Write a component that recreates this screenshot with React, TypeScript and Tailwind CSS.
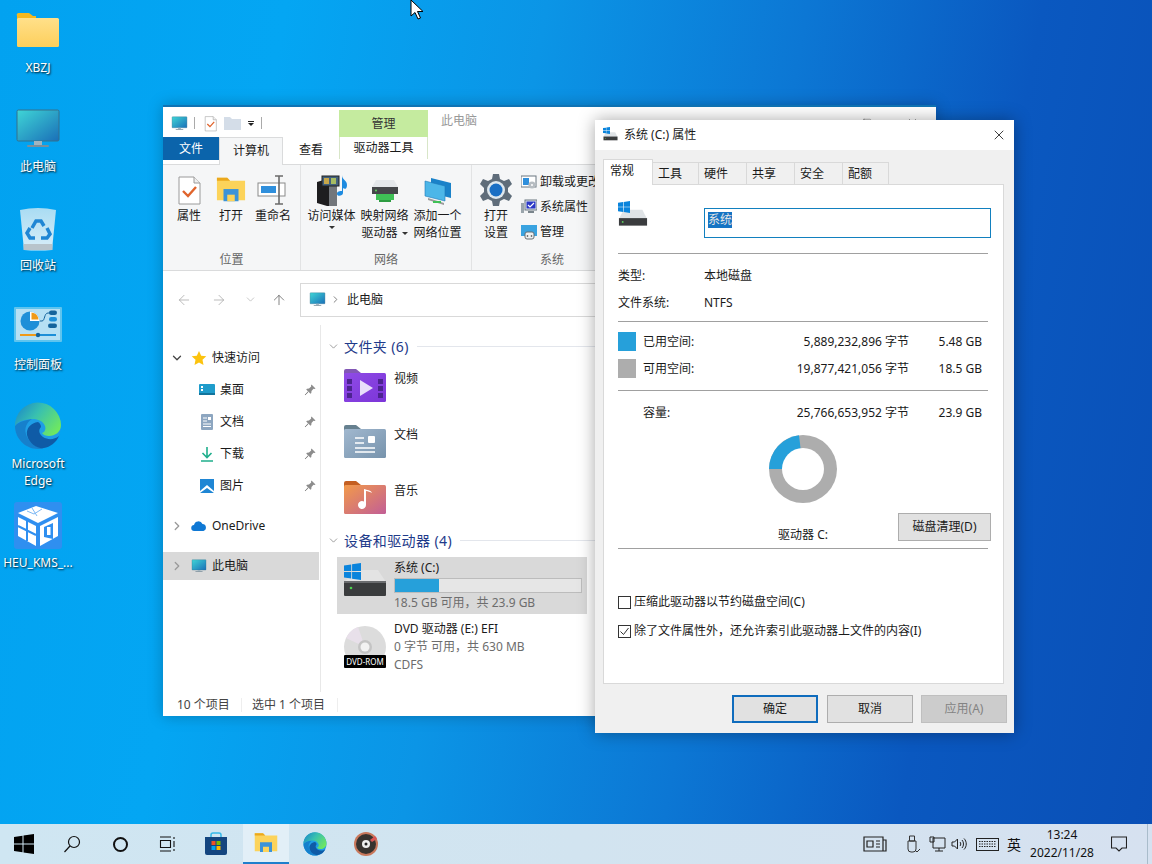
import { ArrowLeft, ArrowRight, ArrowUp, ChevronDown, ChevronRight, X, Square } from "lucide-react";
import type { ReactNode } from "react";

const Monitor = ({ s = 48 }: { s?: number }) => (
  <svg width={s} height={s} viewBox="0 0 48 48">
    <defs>
      <linearGradient id="mon" x1="0" y1="0" x2="1" y2="1">
        <stop offset="0" stopColor="#3fd6d6" />
        <stop offset="1" stopColor="#1a6fb8" />
      </linearGradient>
    </defs>
    <rect x="3" y="5" width="42" height="31" rx="1.5" fill="url(#mon)" stroke="#35708c" strokeWidth="1" />
    <rect x="20" y="36" width="8" height="4" fill="#9fb4c0" />
    <rect x="13" y="40" width="22" height="2" rx="1" fill="#7b8f9b" />
  </svg>
);

const Folder = () => (
  <svg width="48" height="48" viewBox="0 0 48 48">
    <defs>
      <linearGradient id="fol" x1="0" y1="0" x2="0" y2="1">
        <stop offset="0" stopColor="#ffe08a" />
        <stop offset="1" stopColor="#fdcf5c" />
      </linearGradient>
    </defs>
    <path d="M3 10a2 2 0 0 1 2-3h10l4 3h3v5H3z" fill="#f5b81f" />
    <rect x="3" y="12" width="42" height="29" rx="1.5" fill="url(#fol)" />
  </svg>
);

const Recycle = () => (
  <svg width="48" height="48" viewBox="0 0 48 48">
    <defs>
      <linearGradient id="bin" x1="0" y1="0" x2="0" y2="1">
        <stop offset="0" stopColor="#a9dcf3" />
        <stop offset="1" stopColor="#d9eef8" />
      </linearGradient>
    </defs>
    <path d="M6 6 Q24 2 42 6 L38 46 Q24 47 10 46Z" fill="url(#bin)" />
    <rect x="9.500" y="40" width="29" height="6" fill="#b8c4cb" />
    <g fill="none" stroke="#1f86d4" strokeWidth="3.500">
      <path d="M18 24l4-7h5l3 5" />
      <path d="M33 24l3 6-3 4h-6" />
      <path d="M21 34h-5l-3-5 3-5" />
    </g>
  </svg>
);

const ControlPanel = () => (
  <svg width="48" height="48" viewBox="0 0 48 48">
    <rect x="0" y="4" width="48" height="35" rx="1" fill="#5fc4ee" />
    <rect x="2" y="6" width="44" height="31" fill="#b6e0f4" />
    <circle cx="16" cy="18" r="9.500" fill="#1d8fd8" />
    <path d="M16 8.500a9.500 9.500 0 0 1 9.500 9.500H16z" fill="#fff" />
    <path d="M17.500 9.500a8 8 0 0 1 7 7h-7z" fill="#f09a18" />
    <path d="M26 18h2c3 0 2-8 6-8h2" fill="none" stroke="#14639c" strokeWidth="1" />
    <rect x="35" y="7.500" width="8" height="4.500" rx="2.200" fill="#14639c" />
    <rect x="35" y="14" width="8" height="4.500" rx="2.200" fill="#1d8fd8" />
    <rect x="34" y="20.500" width="9" height="4.500" rx="2.200" fill="#14639c" />
    <path d="M6 32h18" stroke="#f09a18" strokeWidth="2" />
    <path d="M24 32h18" stroke="#1d8fd8" strokeWidth="2" />
    <circle cx="24" cy="32" r="2.200" fill="#14639c" />
  </svg>
);

const Edge = ({ s = 48 }: { s?: number }) => (
  <svg width={s} height={s} viewBox="0 0 48 48">
    <defs>
      <linearGradient id="edA" x1="0" y1="0.1" x2="1" y2="0.7">
        <stop offset="0" stopColor="#1a86c9" />
        <stop offset="0.45" stopColor="#38c0b0" />
        <stop offset="1" stopColor="#6fe860" />
      </linearGradient>
    </defs>
    <circle cx="24" cy="24" r="23" fill="#1e9ee6" />
    <path d="M1 24C1 24 4 19 18 17C13 20 10 26 12 32C14 40 22 46 30 46C28 47 26 47 24 47C11 47 1 36 1 24Z" fill="#1680cc" />
    <path d="M24 20C17 21 12 26 13 33C15 42 24 47 30 46C36 45 42 41 45 34C40 38 34 38 29 35C25 32 24 28 27 25C27 23 26 21 24 20Z" fill="#0f5ba6" />
    <path d="M1 24A23 23 0 0 1 47 23C47 30 41 34 35 34C32 34 29 33 28 31C31 30 32 27 31 24C29 19 24 17 19 17C11 17 4 19 1 24Z" fill="url(#edA)" />
  </svg>
);

const Heu = () => (
  <svg width="48" height="48" viewBox="0 0 48 48">
    <rect y="1" width="48" height="47" rx="3" fill="#2f8ff0" />
    <path d="M4 12L22 5 44 12 24 22z" fill="#fff" />
    <path d="M13 10l7 3 8-5M18 7l5 8" stroke="#7db8f4" strokeWidth="1" fill="none" />
    <path d="M4 16L22 25V45L4 35z" fill="#fff" />
    <path d="M13 20V40M4 25L22 34" stroke="#2f8ff0" strokeWidth="2" />
    <path d="M26 25L44 16V35L26 45z" fill="#fff" />
    <path d="M30 26l9-4v16l-9-2z" fill="#2f8ff0" />
    <rect x="33" y="26" width="3.500" height="8" fill="#fff" />
  </svg>
);

const WinLogo = ({ s = 20, c = "#000" }: { s?: number; c?: string }) => (
  <svg width={s} height={s} viewBox="0 0 20 20" fill={c}>
    <path d="M0 3l8.500-1.200V9.500H0zM9.500 1.600L20 0v9.500H9.500zM0 10.500h8.500v7.700L0 17zM9.500 10.500H20V20L9.500 18.400z" />
  </svg>
);

const PropsIcon = ({ s = 32 }: { s?: number }) => (
  <svg width={s} height={s} viewBox="0 0 32 32">
    <path d="M6 3h15l6 6v21H6z" fill="#fff" stroke="#9a9a9a" />
    <path d="M21 3v6h6" fill="#eee" stroke="#9a9a9a" />
    <path d="M10 17l5 5 8-9" fill="none" stroke="#e0642c" strokeWidth="2.400" />
  </svg>
);

const OpenFolder = ({ s = 32 }: { s?: number }) => (
  <svg width={s} height={s} viewBox="0 0 32 32">
    <path d="M1 3h11l3 3h16v21H1z" fill="#fcd35a" />
    <path d="M1 3h11l3 3H1z" fill="#eba81d" />
    <rect x="8" y="15" width="16" height="13" fill="#3b93d8" />
    <rect x="12" y="21" width="8" height="7" fill="#fcd35a" />
  </svg>
);

const RenameIcon = () => (
  <svg width="32" height="32" viewBox="0 0 32 32">
    <rect x="1" y="9" width="27" height="13" fill="#fff" stroke="#8a8a8a" />
    <rect x="4" y="12" width="15" height="7" fill="#2f8fdc" />
    <path d="M18 2h8M22 2v28M18 30h8" stroke="#6b6b6b" strokeWidth="1.600" fill="none" />
  </svg>
);

const MediaIcon = () => (
  <svg width="34" height="34" viewBox="0 0 34 34">
    <path d="M2 9l10-3 10 3v24l-10 0-10-3z" fill="#1d1d1f" />
    <path d="M14 8l8 1v24h-8z" fill="#73777c" />
    <rect x="7" y="3" width="17" height="10" fill="#43617c" stroke="#222" />
    <rect x="9" y="5" width="5" height="6" fill="#c7a74a" />
    <rect x="16" y="5" width="5" height="6" fill="#a7bc62" />
    <path d="M27 2c0 5 5 5 5 10s-3 4-4 3V9v11c0 3-6 4-6 1s3-3 5-3z" fill="#1e8be0" />
  </svg>
);

const DriveSmall = ({ s = 32 }: { s?: number }) => (
  <svg width={s} height={s} viewBox="0 0 32 32">
    <path d="M6 5h20l5 10H1z" fill="#dfe3e6" />
    <rect x="1" y="14" width="30" height="8" fill="#3a3c3e" />
    <circle cx="5" cy="18" r="1" fill="#5ed35e" />
  </svg>
);

const MapDrive = () => (
  <svg width="32" height="32" viewBox="0 0 32 32">
    <path d="M7 6h18l4 7H3z" fill="#e4e7ea" />
    <rect x="3" y="13" width="26" height="7" fill="#45474a" />
    <circle cx="7" cy="16.500" r="1" fill="#5ed35e" />
    <rect x="7" y="20" width="18" height="6" fill="#3fc156" />
    <rect x="10" y="26" width="12" height="2" fill="#2d9c42" />
  </svg>
);

const NetLoc = () => (
  <svg width="32" height="32" viewBox="0 0 32 32">
    <path d="M9 4l20 5v15l-20-5z" fill="#1a82c9" />
    <path d="M3 7l20 5v15L3 22z" fill="#4cb6e8" stroke="#1c79b8" strokeWidth=".6" />
    <path d="M6 24l16 5v2l-16-5z" fill="#9a9a9a" />
    <rect x="11" y="27" width="8" height="2" fill="#3fc156" />
  </svg>
);

const Gear = () => (
  <svg width="34" height="34" viewBox="0 0 34 34">
    <path
      d="M14 1h6l1 5 4 2 5-2 3 5-4 4v4l4 4-3 5-5-2-4 2-1 5h-6l-1-5-4-2-5 2-3-5 4-4v-4L1 11l3-5 5 2 4-2z"
      fill="#5f6d7a"
    />
    <circle cx="17" cy="17" r="9" fill="#dfe8ee" />
    <circle cx="17" cy="17" r="6.500" fill="#1a6fc4" />
  </svg>
);

const SmallUninstall = () => (
  <svg width="16" height="16" viewBox="0 0 16 16">
    <rect x="0" y="2" width="15" height="11" fill="#fff" stroke="#6b7680" />
    <rect x="2" y="4" width="6" height="7" fill="#2f8fdc" />
    <circle cx="11" cy="11" r="3.600" fill="#b6bcc1" />
    <circle cx="11" cy="11" r="1" fill="#fff" />
  </svg>
);

const SmallSys = () => (
  <svg width="16" height="16" viewBox="0 0 16 16">
    <rect x="0" y="4" width="3" height="10" fill="#9aa5ac" />
    <rect x="4" y="1" width="12" height="10" fill="#dfe7ee" stroke="#6b7680" />
    <rect x="5.500" y="2.500" width="9" height="7" fill="#2a37c6" />
    <path d="M7 6l2 2 4-4" stroke="#fff" strokeWidth="1.200" fill="none" />
    <rect x="7" y="12" width="6" height="2" fill="#7a858c" />
  </svg>
);

const SmallManage = () => (
  <svg width="16" height="16" viewBox="0 0 16 16">
    <rect x="0" y="1" width="16" height="11" fill="#3aa3e0" />
    <rect x="4" y="8" width="9" height="7" rx="2" fill="#eef0f1" stroke="#676f75" />
    <circle cx="6.500" cy="12" r=".8" fill="#333" />
    <circle cx="10.500" cy="12" r=".8" fill="#333" />
  </svg>
);

const Star = () => (
  <svg width="16" height="16" viewBox="0 0 16 16">
    <path d="M8 1l2.200 4.700 5.100.6-3.800 3.500 1 5.200L8 12.400 3.500 15l1-5.200L.7 6.300l5.100-.6z" fill="#fcc30e" />
  </svg>
);

const PinIcon = () => (
  <svg width="12" height="12" viewBox="0 0 12 12" fill="#8c8c8c">
    <path d="M7.500 0.500L11.500 4.500 10.500 5 9.500 4.800 7.500 7 7.300 9 6.500 9.800 2.200 5.500 3 4.700 5 4.500 7.200 2.500 7 1.500z" />
    <path d="M4 7.800L1 11l3.200-3z" stroke="#8c8c8c" strokeWidth="1" />
  </svg>
);

const DesktopSmall = () => (
  <svg width="16" height="16" viewBox="0 0 16 16">
    <rect y="2" width="16" height="11" rx="1" fill="#1f9ccb" />
    <rect x="2" y="4" width="2" height="2" fill="#fff" />
    <rect x="2" y="7" width="2" height="2" fill="#fff" />
    <rect y="11" width="16" height="2" fill="#12749c" />
  </svg>
);

const DocSmall = () => (
  <svg width="16" height="16" viewBox="0 0 16 16">
    <rect x="2" y="0" width="12" height="16" rx="1" fill="#8da6c0" />
    <path d="M4 4h4M4 7h4M4 10h8M4 12.500h8" stroke="#fff" strokeWidth="1" />
    <rect x="9" y="3" width="3" height="3" fill="#fff" />
  </svg>
);

const DownloadSmall = () => (
  <svg width="16" height="16" viewBox="0 0 16 16" fill="none" stroke="#1fae8c" strokeWidth="1.600">
    <path d="M8 1v10M3.500 7L8 11.500 12.500 7M2 15h12" />
  </svg>
);

const PicSmall = () => (
  <svg width="16" height="16" viewBox="0 0 16 16">
    <rect x="1" y="1" width="14" height="14" fill="#1f86d4" />
    <path d="M1 15v-2l7-6 7 6v2l-7-5z" fill="#fff" />
  </svg>
);

const Cloud = () => (
  <svg width="16" height="16" viewBox="0 0 16 16">
    <path d="M3.500 13a3 3 0 0 1-.5-6 4.500 4.500 0 0 1 8.500-1A3.600 3.600 0 0 1 12.500 13z" fill="#0f78d4" />
  </svg>
);

const FolderBase = ({ id, tab, a, b, children }: { id: string; tab: string; a: string; b: string; children: ReactNode }) => (
  <svg width="42" height="35" viewBox="0 0 42 35">
    <defs>
      <linearGradient id={id} x1="0" y1="0" x2="1" y2="1">
        <stop offset="0" stopColor={a} />
        <stop offset="1" stopColor={b} />
      </linearGradient>
    </defs>
    <path d="M0 2a2 2 0 0 1 2-2h10l5 4h3v4H0z" fill={tab} />
    <rect x="0" y="4" width="42" height="29" rx="1.500" fill={`url(#${id})`} />
    {children}
  </svg>
);

const VideoFolder = () => (
  <FolderBase id="fv" tab="#8257b5" a="#8f4be6" b="#7c35d8">
    <g fill="#4c2390">
      <rect x="3" y="10" width="5" height="5" />
      <rect x="3" y="17" width="5" height="5" />
      <rect x="3" y="24" width="5" height="5" />
      <rect x="34" y="10" width="5" height="5" />
      <rect x="34" y="17" width="5" height="5" />
      <rect x="34" y="24" width="5" height="5" />
    </g>
    <path d="M16 11l13 8-13 8z" fill="#e9defa" />
  </FolderBase>
);

const DocFolder = () => (
  <FolderBase id="fd" tab="#66808f" a="#a1b8cf" b="#7793ac">
    <path d="M11 13h9M11 18h9M11 23h20M11 27h20" stroke="#fff" strokeWidth="1.600" />
    <rect x="24" y="11" width="7" height="7" rx="1" fill="#fff" />
  </FolderBase>
);

const MusicFolder = () => (
  <FolderBase id="fm" tab="#c45f22" a="#f29a4a" b="#c25e96">
    <path d="M22 10v14a4 4 0 1 1-2-3.500V8c3 1 7 1 8 4-2-1-4-2-6-2z" fill="#fff" />
  </FolderBase>
);

const DriveLarge = () => (
  <div className="relative h-[36px] w-[42px]">
    <svg className="absolute left-0 top-[7px]" width="42" height="28" viewBox="0 0 42 28">
      <path d="M14 0h20l8 12H0z" fill="#e3e3e3" />
      <rect x="0" y="11" width="42" height="15" rx="1" fill="#3a3c3d" />
      <rect x="0" y="11" width="42" height="2" fill="#6a6c6e" />
      <circle cx="7" cy="18" r="1.300" fill="#4dd04d" />
    </svg>
    <div className="absolute left-0 top-0">
      <WinLogo s={17} c="#0a84dc" />
    </div>
  </div>
);

const DvdIcon = () => (
  <div className="relative h-[42px] w-[42px]">
    <svg width="42" height="42" viewBox="0 0 42 42">
      <circle cx="21" cy="21" r="21" fill="#dcdcdc" />
      <path d="M21 21L2 12a21 21 0 0 1 12-11z" fill="#e8e0ea" />
      <circle cx="21" cy="21" r="7" fill="#c4c4c4" />
      <circle cx="21" cy="21" r="4.500" fill="#f2f2f2" />
    </svg>
    <div className="absolute bottom-0 left-0 flex h-[13px] w-full items-center justify-center rounded-[1px] bg-black text-[8px] leading-none text-white">
      DVD-ROM
    </div>
  </div>
);

const Store = () => (
  <svg width="24" height="24" viewBox="0 0 24 24">
    <path d="M7 6V3a2 2 0 0 1 2-2h6a2 2 0 0 1 2 2v3" fill="none" stroke="#35b8e8" strokeWidth="1.500" />
    <path d="M1 5h22v16a2 2 0 0 1-2 2H3a2 2 0 0 1-2-2z" fill="#14457f" />
    <rect x="7.500" y="9" width="4" height="4" fill="#f25022" />
    <rect x="12.500" y="9" width="4" height="4" fill="#7fba00" />
    <rect x="7.500" y="14" width="4" height="4" fill="#00a4ef" />
    <rect x="12.500" y="14" width="4" height="4" fill="#ffb900" />
  </svg>
);

const Disc = () => (
  <svg width="24" height="24" viewBox="0 0 24 24">
    <circle cx="12" cy="12" r="12" fill="#c9785c" />
    <circle cx="12" cy="12" r="10" fill="#38332f" />
    <path d="M21 4a12 12 0 0 1 2 3l-5 3-2-2z" fill="#d85555" />
    <circle cx="12" cy="12" r="4" fill="#eee" />
    <circle cx="12" cy="12" r="1.500" fill="#222" />
  </svg>
);

const Donut = () => (
  <svg width="68" height="68" viewBox="0 0 68 68" className="mx-auto">
    <circle cx="34" cy="34" r="34" fill="#adadad" />
    <path d="M34 34L0 34A34 34 0 0 1 30 .3z" fill="#26a0da" />
    <circle cx="34" cy="34" r="21" fill="#fff" />
  </svg>
);

function DesktopIcon({ icon, label }: { icon: ReactNode; label: ReactNode }) {
  return (
    <div className="flex h-[99px] w-[76px] flex-col items-center pt-[3px]">
      <div className="h-12 w-12">{icon}</div>
      <div className="mt-[5px] whitespace-nowrap text-center text-[12px] leading-[17px] text-white [text-shadow:1px_1px_2px_rgba(0,0,0,0.9)]">
        {label}
      </div>
    </div>
  );
}

function RibbonBtn({ icon, lines, w, arrow }: { icon: ReactNode; lines: ReactNode[]; w: string; arrow?: boolean }) {
  return (
    <div className={`flex flex-col items-center ${w}`}>
      <div className="flex h-[35px] items-center justify-center">{icon}</div>
      <div className="whitespace-nowrap text-center text-[12px] leading-[17px]">
        {lines.map((l, i) => (
          <div key={i}>{l}</div>
        ))}
      </div>
      {arrow && <div className="mt-[2px] h-0 w-0 border-x-[3px] border-t-[3px] border-x-transparent border-t-[#333]" />}
    </div>
  );
}

function Caret() {
  return <span className="ml-1 inline-block h-0 w-0 -translate-y-[2px] border-x-[3px] border-t-[3px] border-x-transparent border-t-[#333]" />;
}

function RibbonGroup({ w, label, children, sep = true, pl, labelClass = "text-center" }: { w: string; label: string; children: ReactNode; sep?: boolean; pl: string; labelClass?: string }) {
  return (
    <div className={`flex h-full shrink-0 flex-col ${w} ${sep ? "border-r border-[#e2e3e4]" : ""}`}>
      <div className={`flex flex-1 pt-[7px] ${pl}`}>{children}</div>
      <div className={`h-[20px] text-[12px] leading-[20px] text-[#666] ${labelClass}`}>{label}</div>
    </div>
  );
}

function NavRow({ icon, label, pin, arrow, gap, selected, mt }: { icon: ReactNode; label: string; pin?: boolean; arrow?: "down" | "right"; gap: string; selected?: boolean; mt?: string }) {
  return (
    <div className={`relative flex h-[28px] w-[156px] items-center ${selected ? "bg-[#d9d9d9]" : ""} ${mt ?? ""}`}>
      <div className="flex w-[28px] shrink-0 justify-center">
        {arrow === "down" && <ChevronDown size={14} strokeWidth={2.2} className="text-[#444]" />}
        {arrow === "right" && <ChevronRight size={14} strokeWidth={2.2} className="text-[#999]" />}
      </div>
      <div className={`flex shrink-0 ${gap}`}>{icon}</div>
      <span className="whitespace-nowrap text-[12px]">{label}</span>
      {pin && (
        <div className="absolute right-[3px] top-[8px]">
          <PinIcon />
        </div>
      )}
    </div>
  );
}

function SectionHead({ label }: { label: string }) {
  return (
    <div className="flex h-[22px] items-center pl-[6px]">
      <ChevronDown size={13} strokeWidth={1.3} className="mr-[4px] text-[#777]" />
      <span className="whitespace-nowrap text-[14px] tracking-[0.4px] text-[#1e3a8a]">{label}</span>
      <div className="ml-2 h-px flex-1 bg-[#e3e6ec]" />
    </div>
  );
}

function FolderRow({ icon, label }: { icon: ReactNode; label: string }) {
  return (
    <div className="flex h-[56px] pl-[23px]">
      <div className="w-[50px] shrink-0">{icon}</div>
      <span className="mt-[1px] text-[12px] leading-[18px]">{label}</span>
    </div>
  );
}

function Explorer() {
  return (
    <div className="absolute left-[163px] top-[105px] flex h-[611px] w-[773px] flex-col overflow-hidden border-t-2 border-[#0f73b4] bg-white text-[#1a1a1a] shadow-[0_0_14px_rgba(0,0,0,0.25)]">
      {/* title row with quick access and context tab */}
      <div className="flex h-[30px] items-start">
        <div className="flex h-full w-[176px] items-center pl-[8px] pt-[2px]">
          <Monitor s={17} />
          <div className="ml-[6px] h-[12px] w-px bg-[#aaa]" />
          <div className="ml-[7px]">
            <PropsIcon s={17} />
          </div>
          <svg className="ml-[5px]" width="17" height="14" viewBox="0 0 17 14">
            <path d="M0 1h6l2 2h9v11H0z" fill="#d4dde8" />
          </svg>
          <div className="ml-[7px] flex flex-col items-center">
            <div className="mb-[1px] h-px w-[6px] bg-[#222]" />
            <div className="h-0 w-0 border-x-[3px] border-t-[3px] border-x-transparent border-t-[#222]" />
          </div>
          <div className="ml-[7px] h-[12px] w-px bg-[#aaa]" />
        </div>
        <div className="mt-[3px] flex h-[27px] w-[89px] items-center justify-center bg-[#c5eb9f] text-[12px] text-[#333]">管理</div>
        <div className="ml-[13px] mt-[5px] text-[12px] leading-[18px] text-[#999]">此电脑</div>
        <div className="ml-auto mt-[9px] flex items-center">
          <Square size={10} strokeWidth={1} className="mr-[34px] text-[#555]" />
          <X size={13} strokeWidth={1} className="mr-[17px] text-[#555]" />
        </div>
      </div>
      {/* ribbon tabs */}
      <div className="flex h-[27px] text-[12px]">
        <div className="flex h-[23px] w-[56px] items-center justify-center bg-[#0b64ab] text-white">文件</div>
        <div className="z-10 flex h-[28px] w-[64px] items-center justify-center border-x border-t border-[#dadbdc] bg-[#f5f6f7] pb-[2px]">计算机</div>
        <div className="flex h-[25px] w-[56px] items-center justify-center">查看</div>
        <div className="flex h-[22px] w-[89px] items-center justify-center border-x border-[#d8e6c8]">驱动器工具</div>
      </div>
      {/* ribbon */}
      <div className="flex h-[107px] shrink-0 border-y border-[#dadbdc] bg-[#f5f6f7]">
        <RibbonGroup w="w-[138px]" label="位置" pl="pl-[5px]">
          <RibbonBtn w="w-[42px]" icon={<PropsIcon />} lines={["属性"]} />
          <RibbonBtn w="w-[42px]" icon={<OpenFolder s={30} />} lines={["打开"]} />
          <RibbonBtn w="w-[42px]" icon={<RenameIcon />} lines={["重命名"]} />
        </RibbonGroup>
        <RibbonGroup w="w-[171px]" label="网络" pl="pl-[4px]">
          <RibbonBtn w="w-[53px]" icon={<MediaIcon />} lines={["访问媒体"]} arrow />
          <RibbonBtn
            w="w-[53px]"
            icon={<MapDrive />}
            lines={[
              "映射网络",
              <>
                驱动器
                <Caret />
              </>,
            ]}
          />
          <RibbonBtn w="w-[53px]" icon={<NetLoc />} lines={["添加一个", "网络位置"]} />
        </RibbonGroup>
        <RibbonGroup w="w-[300px]" label="系统" sep={false} pl="pl-0" labelClass="pl-[68px]">
          <RibbonBtn w="w-[48px]" icon={<Gear />} lines={["打开", "设置"]} />
          <div className="ml-[1px] flex flex-col gap-[9px] pt-[2px] text-[12px] leading-[16px]">
            <div className="flex items-center gap-[3px]">
              <SmallUninstall />
              卸载或更改
            </div>
            <div className="flex items-center gap-[3px]">
              <SmallSys />
              系统属性
            </div>
            <div className="flex items-center gap-[3px]">
              <SmallManage />
              管理
            </div>
          </div>
        </RibbonGroup>
      </div>
      {/* address bar */}
      <div className="flex h-[54px] shrink-0 items-center pt-[3px]">
        <div className="flex w-[137px] items-center pl-[13px] text-[#aaa]">
          <ArrowLeft size={16} strokeWidth={1.2} />
          <ArrowRight size={16} strokeWidth={1.2} className="ml-[19px]" />
          <ChevronDown size={13} strokeWidth={1.2} className="ml-[17px]" />
          <ArrowUp size={16} strokeWidth={1.2} className="ml-[14px] text-[#666]" />
        </div>
        <div className="flex h-[34px] flex-1 items-center border border-[#d9d9d9] pl-[8px] text-[12px]">
          <Monitor s={17} />
          <ChevronRight size={11} strokeWidth={2} className="ml-[4px] text-[#777]" />
          <span className="ml-[6px]">此电脑</span>
        </div>
      </div>
      {/* body */}
      <div className="flex min-h-0 flex-1">
        <div className="w-[158px] shrink-0 border-r border-[#e8e8e8] pt-[19px]">
          <div className="flex h-full flex-col">
            <NavRow arrow="down" icon={<Star />} gap="w-[21px]" label="快速访问" />
            <div className="flex flex-col gap-[4px] pt-[4px]">
              <NavRow icon={<DesktopSmall />} gap="w-[29px] pl-[8px]" label="桌面" pin />
              <NavRow icon={<DocSmall />} gap="w-[29px] pl-[8px]" label="文档" pin />
              <NavRow icon={<DownloadSmall />} gap="w-[29px] pl-[8px]" label="下载" pin />
              <NavRow icon={<PicSmall />} gap="w-[29px] pl-[8px]" label="图片" pin />
            </div>
            <NavRow arrow="right" icon={<Cloud />} gap="w-[21px]" label="OneDrive" mt="mt-[12px]" />
            <NavRow arrow="right" icon={<Monitor s={16} />} gap="w-[21px]" label="此电脑" selected mt="mt-[12px]" />
          </div>
        </div>
        <div className="flex-1 pt-[10px]">
          <SectionHead label="文件夹 (6)" />
          <div className="pt-[12px]">
            <FolderRow icon={<VideoFolder />} label="视频" />
            <FolderRow icon={<DocFolder />} label="文档" />
            <FolderRow icon={<MusicFolder />} label="音乐" />
          </div>
          <div className="-mt-[8px]">
            <SectionHead label="设备和驱动器 (4)" />
          </div>
          <div className="ml-[16px] mt-[6px] flex h-[57px] w-[250px] bg-[#d9d9d9] pl-[7px] pt-[6px]">
            <div className="w-[50px] shrink-0">
              <DriveLarge />
            </div>
            <div className="-mt-[3px] w-[188px] text-[12px]">
              <div className="h-[16px] leading-[16px]">系统 (C:)</div>
              <div className="mt-[2px] h-[15px] border border-[#bcbcbc] bg-[#e6e6e6]">
                <div className="h-full w-[44px] bg-[#26a0da]" />
              </div>
              <div className="mt-[1px] leading-[17px] text-[#6d6d6d]">18.5 GB 可用，共 23.9 GB</div>
            </div>
          </div>
          <div className="ml-[23px] mt-[6px] flex">
            <div className="w-[50px] shrink-0 pt-[6px]">
              <DvdIcon />
            </div>
            <div className="text-[12px] leading-[18px]">
              <div>DVD 驱动器 (E:) EFI</div>
              <div className="text-[#6d6d6d]">0 字节 可用，共 630 MB</div>
              <div className="text-[#6d6d6d]">CDFS</div>
            </div>
          </div>
        </div>
      </div>
      {/* status bar */}
      <div className="flex h-[24px] shrink-0 items-center pl-[14px] pt-[1px] text-[12px] text-[#444]">
        <span className="w-[64px]">10 个项目</span>
        <span className="h-[14px] w-px bg-[#eee]" />
        <span className="ml-[10px] w-[85px]">选中 1 个项目</span>
        <span className="h-[14px] w-px bg-[#eee]" />
      </div>
    </div>
  );
}

function DialogRow({ swatch, label, num, gb }: { swatch?: string; label: string; num: string; gb: string }) {
  return (
    <div className="flex h-[19px] items-center pr-[6px] leading-[19px]">
      <div className={`h-[19px] w-[18px] shrink-0 ${swatch ?? ""}`} />
      <span className="ml-[7px] flex-1">{label}</span>
      <span className="text-right">{num}</span>
      <span className="w-[73px] text-right">{gb}</span>
    </div>
  );
}

function Hr({ mt }: { mt: string }) {
  return <div className={`h-px bg-[#a0a0a0] ${mt}`} />;
}

function Tab({ label, active, w = "w-[49px]" }: { label: string; active?: boolean; w?: string }) {
  if (active)
    return (
      <div className="z-10 flex h-[26px] w-[50px] items-center border-x border-t border-[#d9d9d9] bg-white pb-[3px] pl-[6px]">
        {label}
      </div>
    );
  return (
    <div className={`mt-[3px] -ml-px flex h-[22px] items-center border border-b-0 border-[#d9d9d9] bg-[#f0f0f0] pl-[5px] ${w}`}>
      {label}
    </div>
  );
}

function CheckRow({ checked, label, mt }: { checked?: boolean; label: string; mt: string }) {
  return (
    <div className={`flex h-[18px] items-center ${mt}`}>
      <div className="flex h-[13px] w-[13px] shrink-0 items-center justify-center border border-[#333] bg-white">
        {checked && (
          <svg width="11" height="11" viewBox="0 0 11 11" fill="none" stroke="#333" strokeWidth="1">
            <path d="M1.500 5.500L4.500 8.500 9.500 2" />
          </svg>
        )}
      </div>
      <span className="ml-[3px] whitespace-nowrap">{label}</span>
    </div>
  );
}

function Dialog() {
  return (
    <div className="absolute left-[595px] top-[120px] flex h-[613px] w-[419px] flex-col bg-[#f0f0f0] text-[12px] text-[#1a1a1a] shadow-[0_0_16px_rgba(0,0,0,0.35)]">
      <div className="flex h-[30px] shrink-0 items-center bg-white pl-[8px]">
        <div className="relative h-[16px] w-[16px]">
          <div className="absolute left-0 top-[3px]">
            <DriveSmall s={15} />
          </div>
          <div className="absolute left-0 top-0">
            <WinLogo s={7} c="#0a84dc" />
          </div>
        </div>
        <span className="ml-[5px]">系统 (C:) 属性</span>
        <X size={16} strokeWidth={1.3} className="ml-auto mr-[7px] text-[#222]" />
      </div>
      <div className="flex flex-1 flex-col px-[8px] pt-[9px]">
        <div className="flex h-[25px] shrink-0">
          <Tab label="常规" active />
          <Tab label="工具" w="w-[47px]" />
          <Tab label="硬件" />
          <Tab label="共享" />
          <Tab label="安全" />
          <Tab label="配额" w="w-[47px]" />
        </div>
        <div className="h-[500px] w-[401px] shrink-0 border border-[#d9d9d9] bg-white pl-[14px] pr-[15px]">
          <div className="flex pt-[23px]">
            <div className="relative h-[30px] w-[86px] shrink-0">
              <div className="absolute -top-[7px] left-0 h-[28px] w-[30px]">
                <div className="absolute left-0 top-[4px]">
                  <DriveSmall s={30} />
                </div>
                <div className="absolute left-0 top-0">
                  <WinLogo s={12} c="#0a84dc" />
                </div>
              </div>
            </div>
            <div className="flex h-[30px] w-[287px] shrink-0 items-start border border-[#1280bf] pl-[3px] pt-[3px]">
              <span className="bg-[#1674c4] leading-[16px] text-[#e5e5e5]">系统</span>
            </div>
          </div>
          <Hr mt="mt-[15px]" />
          <div className="mt-[13px] flex h-[18px] items-center">
            <span className="w-[86px]">类型:</span>
            <span>本地磁盘</span>
          </div>
          <div className="mt-[9px] flex h-[18px] items-center">
            <span className="w-[86px]">文件系统:</span>
            <span>NTFS</span>
          </div>
          <Hr mt="mt-[9px]" />
          <div className="mt-[10px]">
            <DialogRow swatch="bg-[#26a0da]" label="已用空间:" num="5,889,232,896 字节" gb="5.48 GB" />
          </div>
          <div className="mt-[8px]">
            <DialogRow swatch="bg-[#adadad]" label="可用空间:" num="19,877,421,056 字节" gb="18.5 GB" />
          </div>
          <Hr mt="mt-[12px]" />
          <div className="mt-[12px]">
            <DialogRow label="容量:" num="25,766,653,952 字节" gb="23.9 GB" />
          </div>
          <div className="mt-[13px]">
            <Donut />
          </div>
          <div className="relative mt-[10px] flex h-[28px] items-end justify-center">
            <span className="-mb-[2px] leading-[16px]">驱动器 C:</span>
            <div className="absolute -right-[3px] top-0 flex h-[28px] w-[93px] items-center justify-center border border-[#adadad] bg-[#e1e1e1]">
              磁盘清理(D)
            </div>
          </div>
          <Hr mt="mt-[7px]" />
          <CheckRow label="压缩此驱动器以节约磁盘空间(C)" mt="mt-[44px]" />
          <CheckRow checked label="除了文件属性外，还允许索引此驱动器上文件的内容(I)" mt="mt-[11px]" />
        </div>
        <div className="flex pt-[11px]">
          <div className="ml-[129px] flex h-[28px] w-[86px] shrink-0 items-center justify-center border-2 border-[#0f6cbd] bg-[#e1e1e1]">确定</div>
          <div className="ml-[9px] flex h-[28px] w-[86px] shrink-0 items-center justify-center border border-[#adadad] bg-[#e1e1e1]">取消</div>
          <div className="ml-[8px] flex h-[28px] w-[86px] shrink-0 items-center justify-center border border-[#bfbfbf] bg-[#cccccc] text-[#838383]">应用(A)</div>
        </div>
      </div>
    </div>
  );
}

function Taskbar() {
  return (
    <div className="absolute bottom-0 left-0 flex h-10 w-full items-center bg-[linear-gradient(90deg,#cfe6f2_0%,#d2e4f0_50%,#d6e1f0_100%)] text-[12px] text-[#111]">
      <div className="flex h-full w-12 items-center justify-center">
        <WinLogo />
      </div>
      <div className="flex h-full w-12 items-center justify-center">
        <svg width="18" height="18" viewBox="0 0 18 18" fill="none" stroke="#111" strokeWidth="1.200">
          <circle cx="11" cy="7" r="5.500" />
          <path d="M7 11l-5.500 6" />
        </svg>
      </div>
      <div className="flex h-full w-12 items-center justify-center">
        <div className="h-[15px] w-[15px] rounded-full border-2 border-[#111]" />
      </div>
      <div className="flex h-full w-12 items-center justify-center">
        <svg width="18" height="16" viewBox="0 0 18 16" fill="none" stroke="#111" strokeWidth="1.100">
          <path d="M1 1h11M1 15h11M1.500 4.500h10v7h-10zM15 1v2M15 5v6M15 13v2" />
        </svg>
      </div>
      <div className="mr-[3px] flex h-full w-12 items-center justify-center">
        <Store />
      </div>
      <div className="flex h-full w-[46px] items-center justify-center border-b-[2px] border-[#1f7fcc] bg-[#e2eff7]">
        <OpenFolder s={24} />
      </div>
      <div className="flex h-full w-[52px] items-center justify-center">
        <Edge s={24} />
      </div>
      <div className="flex h-full w-[50px] items-center justify-center">
        <Disc />
      </div>
      <div className="ml-auto flex h-full items-center">
        <div className="flex w-[40px] justify-center">
          <svg width="24" height="16" viewBox="0 0 24 16" fill="none" stroke="#222" strokeWidth="1.200">
            <path d="M1 1h19v14H1zM20 4h3v11h-3" />
            <path d="M4 5h6v6H4zM13 5h4M13 8h4M13 11h4" />
          </svg>
        </div>
        <div className="ml-[6px] flex w-[24px] justify-center">
          <svg width="14" height="18" viewBox="0 0 14 18" fill="none" stroke="#333" strokeWidth="1">
            <path d="M3.500 1h5v5h-5zM2 6h8v8a3 3 0 0 1-3 3H5a3 3 0 0 1-3-3zM9 15l2 2 3-3" />
          </svg>
        </div>
        <div className="flex w-[24px] justify-center">
          <svg width="17" height="16" viewBox="0 0 17 16" fill="none" stroke="#222" strokeWidth="1">
            <path d="M4 2h12v10H4zM1 1h4v5H1zM10 12v3M6 15h8" />
          </svg>
        </div>
        <div className="flex w-[20px] justify-center">
          <svg width="16" height="14" viewBox="0 0 16 14" fill="none" stroke="#222" strokeWidth="1">
            <path d="M1 5h2.500L6.500 2v10l-3-3H1zM9 5c1 1 1 3 0 4M11 3c2 2 2 6 0 8M13 1.500c3 3 3 8 0 11" />
          </svg>
        </div>
        <div className="flex w-[36px] justify-center">
          <svg width="23" height="13" viewBox="0 0 23 13" fill="none" stroke="#222" strokeWidth="1">
            <rect x=".5" y=".5" width="22" height="12" />
            <path d="M3 3.500h17M3 6h17M3 8.500h17" strokeDasharray="1.500 1" />
          </svg>
        </div>
        <div className="w-[18px] text-center text-[14px]">英</div>
        <div className="w-[78px] text-center leading-[18px]">
          <div>13:24</div>
          <div>2022/11/28</div>
        </div>
        <div className="flex w-[36px] justify-center">
          <svg width="16" height="16" viewBox="0 0 16 16" fill="none" stroke="#222" strokeWidth="1.100">
            <path d="M.5 1h15v11h-4.500L8 15l-3-3H.5z" />
          </svg>
        </div>
        <div className="ml-[10px] h-full w-[5px] border-l border-[#a9bccb]" />
      </div>
    </div>
  );
}

export default function App() {
  return (
    <div className="relative h-[864px] w-[1152px] overflow-hidden bg-[linear-gradient(100deg,#02a2f0_0%,#04a6f3_22%,#0b95e6_42%,#0c77d4_62%,#0a58c0_80%,#0a4fb6_100%)] font-['Noto_Sans','Noto_Sans_CJK_SC',sans-serif]">
      <div className="flex flex-col pt-[3px]">
        <DesktopIcon icon={<Folder />} label="XBZJ" />
        <DesktopIcon icon={<Monitor />} label="此电脑" />
        <DesktopIcon icon={<Recycle />} label="回收站" />
        <DesktopIcon icon={<ControlPanel />} label="控制面板" />
        <DesktopIcon
          icon={<Edge />}
          label={
            <>
              Microsoft
              <br />
              Edge
            </>
          }
        />
        <DesktopIcon icon={<Heu />} label="HEU_KMS_..." />
      </div>
      <Explorer />
      <Dialog />
      <Taskbar />
      {/* mouse pointer */}
      <svg className="absolute left-[410px] top-0" width="14" height="20" viewBox="0 0 14 20">
        <path d="M1 0v16l4-3.500L8 19l2.500-1-3-6.500H13z" fill="#fff" stroke="#000" strokeWidth="1" />
      </svg>
    </div>
  );
}
